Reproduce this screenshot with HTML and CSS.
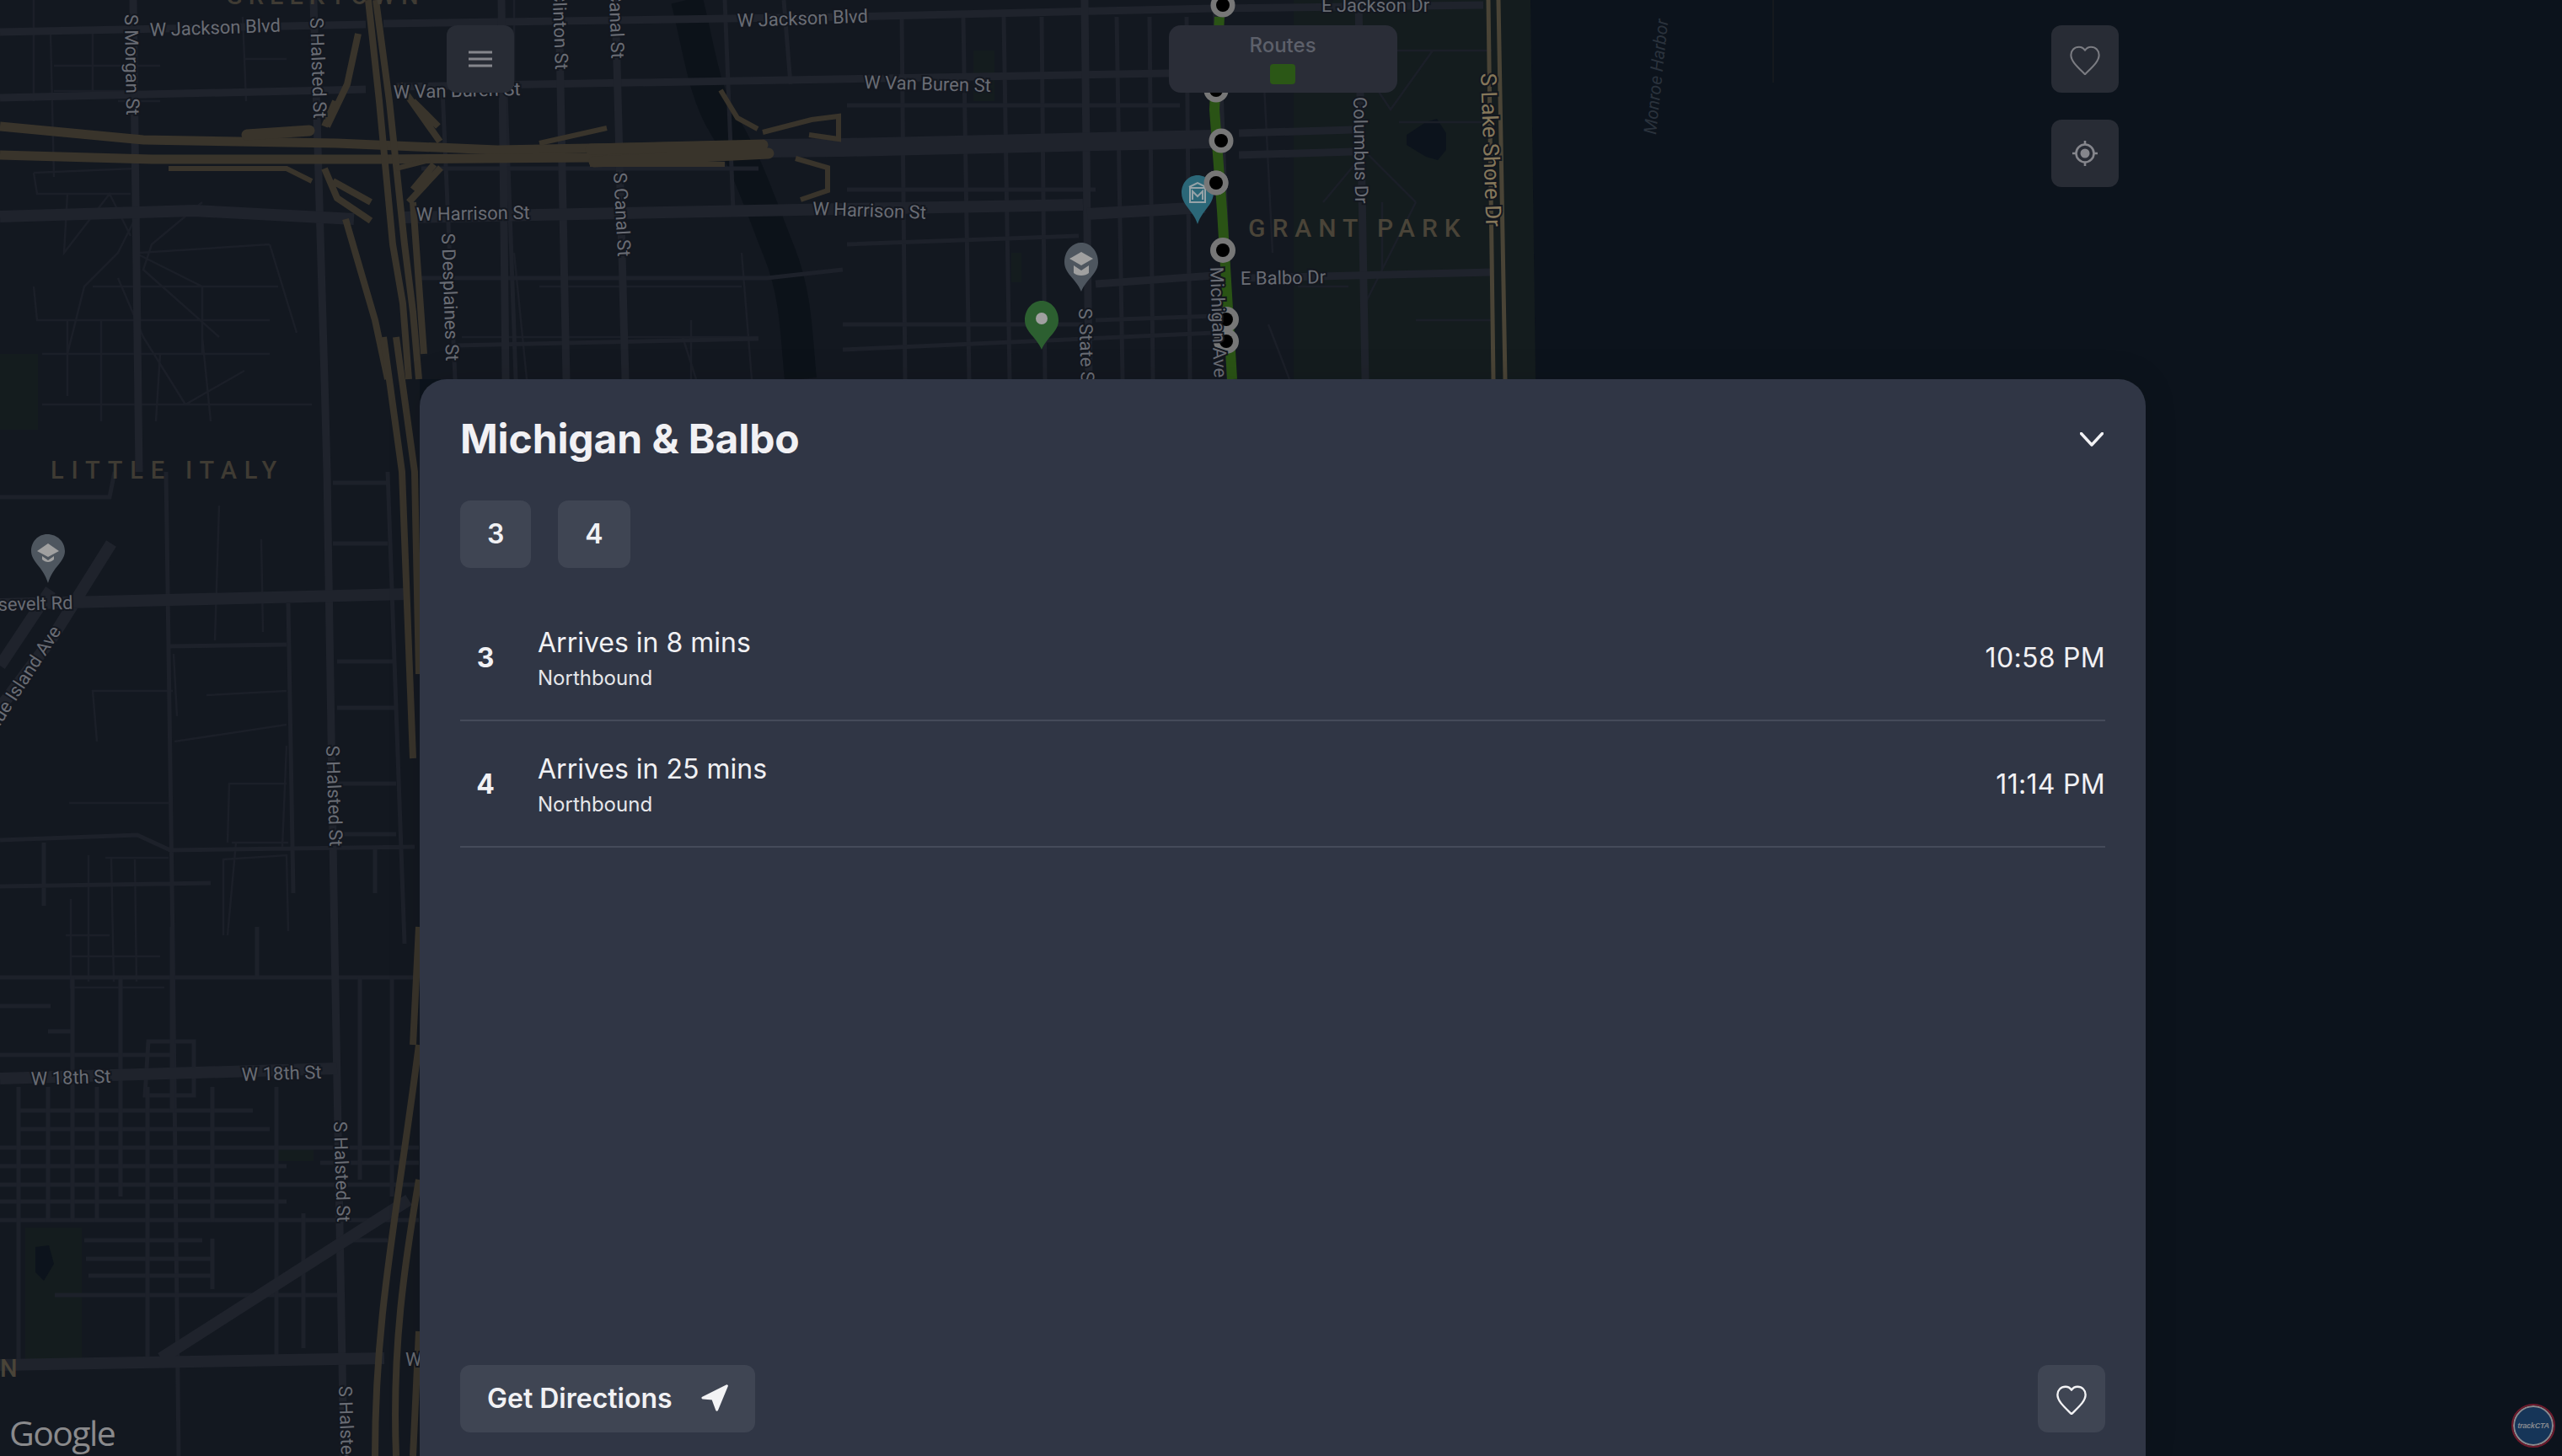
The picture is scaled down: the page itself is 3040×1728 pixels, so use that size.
FILE: index.html
```html
<!DOCTYPE html>
<html lang="en">
<head>
<meta charset="utf-8">
<title>Michigan &amp; Balbo</title>
<link rel="stylesheet" href="styles.css">
</head>
<body>
<div class="app">
  <svg class="map" viewBox="0 0 3040 1728" width="3040" height="1728" aria-label="Map">
    <rect class="land" width="3040" height="1728"/>
    <path class="lake" d="M1816 0H3040V1728H498V450H1822Z"/>
    <path class="park" d="M1535 0H1816L1822 450H1535Z"/>
    <path class="park" d="M30 1457H97V1615H30ZM0 420H45V510H0ZM1155 60H1180V120H1155ZM1200 300H1212V335H1200ZM328 1362H372V1378H328Z"/>
    <path class="river" d="M815 0C830 60 835 110 860 150S905 250 925 300 945 400 950 450"/>
    <path class="pond" d="M1692 145L1705 141 1716 158 1716 178 1706 190 1692 186 1669 172 1669 160Z"/>
    <path class="pond" d="M42 1480L58 1478 64 1500 52 1520 42 1510Z"/>

    <g class="thin">
      <path d="M40 0V120M60 40L64 210M110 40V110M288 20L292 120M64 78H190M64 108H150M190 120H140M290 70H340"/>
      <path d="M40 205L160 200M40 205L44 230H155M80 230L76 300 130 230 155 280M160 260L140 300 100 340 80 420M240 240L180 290 170 320 260 400M160 300L240 340 320 340M160 340H240V420H160ZM165 300L320 290M320 290L352 395M110 340H330M40 340L44 380H320M80 380V470M50 420H320M140 330L170 400 220 480 290 440M240 400L250 500M190 420L185 500M120 380V500M50 480H370"/>
      <path d="M640 340H880M610 300L625 450M880 300L892 450M548 400H900M810 400L826 450M610 0V100M820 380V450"/>
      <path d="M1535 60H1770M1590 40L1650 130 1700 60M1660 145H1760M1570 240L1620 180 1680 240M1640 240V320L1680 240M1620 360L1660 280M1680 380H1770M1540 340H1600M1500 100L1510 300M1505 385L1530 450"/>
      <path d="M205 820H110L115 880M207 880L340 860M270 1000L272 930H340M340 885L335 1005M275 1000H342M265 1110V1020L340 1015 342 1105M280 1000L270 1110M660 860L660 880M255 760L260 600M310 640L312 750M206 776L210 850M245 825L340 820"/>
      <path d="M82 953H200M125 1018H200M84 1067V1172H195M78 1110L130 1110M84 1135H190M105 1015L105 1165M132 1018L135 1165M160 1020L162 1165"/>
    </g>
    <g class="minor">
      <path d="M860 0L870 250M930 0L938 100M600 110L612 450M1070 20L1074 450M1143 20L1150 450M1191 20L1198 450M1236 20L1240 450M1325 20L1332 450M1364 20L1368 450M1408 20L1412 450M525 105L540 450"/>
      <path d="M500 200H900M500 330H910L1000 320M540 410L900 402M1005 125H1400M1005 225H1300M1005 290L1280 280M1170 385H1285M1300 380L1440 375M1000 385L1170 385"/>
      <path d="M1000 415L1440 395"/>
      <path d="M197 560L205 1120 212 1728M342 716L348 1060M0 997L163 991 202 1009 492 1005M200 767L340 765M0 1052L250 1048M460 560L480 1120M0 590H130L136 560M52 1000V1075M395 573H460M395 645H460M400 785H470M400 840H470M400 930H470M400 990H470M445 1005V1060M505 1005V1060"/>
      <path d="M0 1160H497M0 1194H60M88 1224H57M0 1252H205M176 1236H230V1300H172ZM20 1318H300M20 1340H320M0 1362H497M0 1384H340M0 1406H497M0 1426H340M0 1448H497M100 1472H240M102 1494H250M105 1514H250M65 1537H400M400 1472H460M380 1380H497"/>
      <path d="M22 1290V1620M57 1290V1450M86 1160V1450M115 1290V1450M143 1160V1420M175 1290V1620M204 1100V1320M252 1290V1450M252 1470V1530M328 1290V1610M360 1440V1600M427 1160V1400M465 1160V1420M305 1100V1160"/>
    </g>
    <g class="major">
      <path d="M0 38L434 29M455 28L1000 20 1440 10 1760 6"/>
      <path d="M0 116L434 106M470 103L1440 86"/>
      <path d="M158 0L165 560M372 0L385 450 388 560 397 1120 408 1728M595 0L600 450M663 0L672 450M730 0L742 450"/>
      <path d="M1287 0L1292 450M1612 0L1620 450M1443 0L1460 450"/>
      <path d="M1300 337L1440 327M1480 330L1770 323M1470 158L1605 154M1470 184L1605 180"/>
      <path class="wide" d="M0 257L230 250 420 260M480 258L1000 248 1285 243M1290 254L1430 246"/>
      <path class="wide" d="M0 717L482 705M0 1280L400 1268M0 1620L456 1612M485 1424L191 1612M132 645L60 760 0 840M60 700L0 790"/>
      <path class="broad" d="M905 176L1000 175 1440 165"/>
    </g>
    <g class="hwy">
      <path class="thick" d="M0 150L170 166 400 170 590 178 900 172"/>
      <path class="thick" d="M0 184L180 189 450 189 700 187 910 180"/>
      <path class="heavy" d="M293 160L367 155M701 177L905 172M705 192L912 182"/>
      <path d="M437 0L450 120 466 290 478 360 485 450M446 0L462 120 480 290 490 370 497 450"/>
      <path d="M425 40L412 100 388 150M398 120L385 150M385 200L400 235 440 262M410 260L445 380 460 450M395 215L440 240M474 100L522 168M490 120L520 150M523 199L485 240M515 195L490 225M490 240L503 420"/>
      <path class="ramp" d="M855 107L875 140 899 153M905 157L963 142 995 138 995 165 960 160M944 188L982 199 982 226 950 237M640 170L720 152M700 195L860 195M200 200L340 200 370 215M470 200L510 190"/>
      <path d="M455 400L477 560 490 900M470 400L492 560 497 800M497 1100L490 1240"/>
      <path d="M497 1240C470 1450 445 1560 445 1728M497 1400C480 1500 465 1600 470 1728M497 1580L490 1728"/>
      <path class="shore" d="M1766 0L1772 450M1778 0L1786 450"/>
    </g>
    <path class="route" d="M1447 20L1441 130 1450 250 1462 450"/>
    <g class="stops">
      <circle class="ring" cx="1451" cy="6" r="14.5"/><circle class="hole" cx="1451" cy="6" r="8"/>
      <circle class="ring" cx="1443" cy="107" r="14.5"/><circle class="hole" cx="1443" cy="107" r="8"/>
      <circle class="ring" cx="1449" cy="167" r="14.5"/><circle class="hole" cx="1449" cy="167" r="8"/>
      <circle class="ring" cx="1443" cy="217" r="14.5"/><circle class="hole" cx="1443" cy="217" r="8"/>
      <circle class="ring" cx="1451" cy="297" r="15"/><circle class="hole" cx="1451" cy="297" r="8"/>
      <circle class="ring" cx="1455" cy="379" r="15"/><circle class="hole" cx="1455" cy="379" r="8"/>
      <circle class="ring" cx="1455" cy="405" r="15"/><circle class="hole" cx="1455" cy="405" r="8"/>
    </g>
    <path class="pin-teal" d="M1421 208C1410 208 1402 217 1402 229 1402 243 1416 250 1421 266 1426 250 1440 243 1440 229 1440 217 1432 208 1421 208Z"/>
    <path class="glyph-stroke" d="M1411 222L1421 217 1431 222M1412 223H1430V240H1412ZM1415 237V227L1421 233 1427 227V237"/>
    <circle class="ring" cx="1443" cy="217" r="14.5"/><circle class="hole" cx="1443" cy="217" r="8"/>
    <path class="pin-grey" d="M1283 288C1272 288 1263 298 1263 311 1263 325 1277 331 1283 346 1289 331 1303 325 1303 311 1303 298 1294 288 1283 288Z"/>
    <path class="glyph-fill" d="M1283 299L1269 307 1283 315 1297 307ZM1274 315L1283 321 1292 315V324C1288 328 1278 328 1274 324Z"/>
    <path class="pin-green" d="M1236 357C1225 357 1216 367 1216 380 1216 394 1230 400 1236 415 1242 400 1256 394 1256 380 1256 367 1247 357 1236 357Z"/>
    <ellipse class="glyph-fill" cx="1236" cy="378" rx="7" ry="7"/>
    <path class="pin-grey" d="M56 634C45 634 37 643 37 654 37 667 51 672 57 692 63 672 77 667 77 654 77 643 68 634 56 634Z"/>
    <path class="glyph-fill" d="M57 645L44 654 57 661 70 654ZM50 660L57 665 64 660V664C60 668 54 668 50 664Z"/>

    <g class="lbl">
      <text x="178" y="43" transform="rotate(-2 178 43)">W Jackson Blvd</text>
      <text x="875" y="32" transform="rotate(-2 875 32)">W Jackson Blvd</text>
      <text x="467" y="117" transform="rotate(-1.5 467 117)">W Van Buren St</text>
      <text x="1025" y="105" transform="rotate(1.5 1025 105)">W Van Buren St</text>
      <text x="494" y="262" transform="rotate(-1 494 262)">W Harrison St</text>
      <text x="964" y="255" transform="rotate(2 964 255)">W Harrison St</text>
      <text x="1568" y="14">E Jackson Dr</text>
      <text x="1472" y="338" transform="rotate(-1 1472 338)">E Balbo Dr</text>
      <text transform="translate(148 17) rotate(89)">S Morgan St</text>
      <text transform="translate(368 21) rotate(88)">S Halsted St</text>
      <text transform="translate(655 -30) rotate(88)">S Clinton St</text>
      <text transform="translate(722 -30) rotate(88)">S Canal St</text>
      <text transform="translate(524 277) rotate(88)">S Desplaines St</text>
      <text transform="translate(728 205) rotate(87)">S Canal St</text>
      <text transform="translate(1606 115) rotate(89)">Columbus Dr</text>
      <text class="lbl-gold" transform="translate(1757 87) rotate(88)">S Lake Shore Dr</text>
      <text transform="translate(1280 366) rotate(88)">S State St</text>
      <text transform="translate(1436 317) rotate(88)">Michigan Ave</text>
      <text x="-41" y="725" transform="rotate(-1.5 0 725)">Roosevelt Rd</text>
      <text transform="translate(-8 874) rotate(-57)">Blue Island Ave</text>
      <text transform="translate(387 885) rotate(88)">S Halsted St</text>
      <text x="37" y="1288" transform="rotate(-2 37 1288)">W 18th St</text>
      <text x="287" y="1283" transform="rotate(-2 287 1283)">W 18th St</text>
      <text transform="translate(396 1331) rotate(88)">S Halsted St</text>
      <text transform="translate(402 1645) rotate(88)">S Halsted St</text>
      <text x="481" y="1621">W</text>
    </g>
    <g class="area">
      <text class="area-park" x="1481" y="281">GRANT PARK</text>
      <text class="area-hood" x="60" y="568">LITTLE ITALY</text>
      <text class="area-top" x="268" y="5">GREEKTOWN</text>
      <text class="area-n" x="0" y="1634">N</text>
    </g>
    <text class="harbor" transform="translate(1965 160) rotate(-84)">Monroe Harbor</text>
    <path class="pier" d="M2104 0V98"/>
    <text class="google" x="11" y="1716">Google</text>
  </svg>

  <div class="controls">
    <button class="icon-btn" type="button" aria-label="Menu">
      <svg class="ico-menu" viewBox="0 0 28 20" width="28" height="20"><path d="M0 2H28M0 10H28M0 18H28"/></svg>
    </button>
    <div class="routes">
      <span class="routes-title">Routes</span>
      <span class="routes-swatch"></span>
    </div>
    <div class="stack">
      <button class="icon-btn" type="button" aria-label="Favourites">
        <svg class="ico-heart dim" viewBox="0 0 24 24" width="38" height="38"><path d="M16.5 3C14.5 3 13 4 12 5.5 11 4 9.5 3 7.5 3 4 3 1.5 5.7 1.5 9 1.5 14 7 18.5 12 23.5 17 18.5 22.5 14 22.5 9 22.5 5.7 20 3 16.5 3Z"/></svg>
      </button>
      <button class="icon-btn" type="button" aria-label="Locate me">
        <svg class="ico-locate" viewBox="0 0 30 30" width="30" height="30"><circle class="ring-line" cx="15" cy="15" r="10.5"/><circle class="dot" cx="15" cy="15" r="5.5"/><path class="ring-line" d="M15 0V4M15 26V30M0 15H4M26 15H30"/></svg>
      </button>
    </div>
  </div>

  <section class="panel">
    <header class="panel-head">
      <h1 class="panel-title">Michigan &amp; Balbo</h1>
      <svg class="ico-chevron" viewBox="0 0 28 17" width="28" height="17"><path d="M1.5 1.5L14 15 26.5 1.5"/></svg>
    </header>
    <div class="pills">
      <span class="pill">3</span>
      <span class="pill">4</span>
    </div>
    <ul class="arrivals">
      <li class="arrival">
        <span class="arrival-num">3</span>
        <div class="arrival-text">
          <span class="arrival-eta">Arrives in 8 mins</span>
          <span class="arrival-dir">Northbound</span>
        </div>
        <span class="arrival-time">10:58 PM</span>
      </li>
      <li class="arrival">
        <span class="arrival-num">4</span>
        <div class="arrival-text">
          <span class="arrival-eta">Arrives in 25 mins</span>
          <span class="arrival-dir">Northbound</span>
        </div>
        <span class="arrival-time">11:14 PM</span>
      </li>
    </ul>
    <footer class="panel-foot">
      <button class="directions" type="button">
        <span>Get Directions</span>
        <svg class="ico-nav" viewBox="0 0 33 32" width="33" height="32"><path d="M31 1.5L2 16 14 17 19 30.5Z"/></svg>
      </button>
      <button class="fav" type="button" aria-label="Save stop">
        <svg class="ico-heart" viewBox="0 0 24 24" width="38" height="38"><path d="M16.5 3C14.5 3 13 4 12 5.5 11 4 9.5 3 7.5 3 4 3 1.5 5.7 1.5 9 1.5 14 7 18.5 12 23.5 17 18.5 22.5 14 22.5 9 22.5 5.7 20 3 16.5 3Z"/></svg>
      </button>
    </footer>
  </section>

  <div class="badge"><span>trackCTA</span></div>
</div>
</body>
</html>
```

FILE: styles.css
```css
* { box-sizing: border-box; }
html, body { margin: 0; padding: 0; background: #0c141d; }
body { font-family: Inter, "Liberation Sans", sans-serif; color: #f1f1f4; }

.app { position: relative; width: 3040px; height: 1728px; overflow: hidden; }

/* Map canvas */
.map { position: absolute; inset: 0; display: block; }
.land { fill: #131820; }
.lake { fill: #0c131c; }
.park { fill: #141c1e; }
.pond { fill: #0c131c; }
.river { fill: none; stroke: #0c1219; stroke-width: 38; }
.thin path, .minor path, .major path, .hwy path, .route, .pier { fill: none; }
.thin path { stroke: #1b1f28; stroke-width: 2.5; }
.minor path { stroke: #1d212a; stroke-width: 5; }
.major path { stroke: #1f232c; stroke-width: 9; }
.major .wide { stroke-width: 14; }
.major .broad { stroke-width: 22; }
.hwy path { stroke: #39342b; stroke-width: 8; }
.hwy .thick { stroke-width: 11; }
.hwy .heavy { stroke-width: 13; stroke-linecap: round; }
.hwy .ramp { stroke-width: 6; }
.hwy .shore { stroke: #4a4436; stroke-width: 5; }
.route { stroke: #2a5315; stroke-width: 12; }
.ring { fill: #777; }
.hole { fill: #000; }
.pin-teal { fill: #2b6778; }
.pin-grey { fill: #4e565f; }
.pin-green { fill: #2c5f30; }
.glyph-fill { fill: #a0a0a0; }
.glyph-stroke { fill: none; stroke: #96a3a8; stroke-width: 2; }
.pier { stroke: #15191e; stroke-width: 2; }

.lbl text {
  font-family: Roboto, "Liberation Sans", sans-serif;
  font-size: 22px;
  fill: #696c74;
  stroke: #13171f;
  stroke-width: 4px;
  paint-order: stroke;
}
.lbl .lbl-gold { fill: #85775a; font-size: 26px; }
.area text { font-family: Roboto, "Liberation Sans", sans-serif; font-weight: 500; paint-order: stroke; }
.area-park { font-size: 30px; letter-spacing: 8px; fill: #4a4438; }
.area-hood { font-size: 29px; letter-spacing: 8.8px; fill: #3f3b33; }
.area-top { font-size: 29px; letter-spacing: 7px; fill: #3f3b33; }
.area-n { font-size: 29px; fill: #4a4438; }
.harbor { font-family: Roboto, "Liberation Sans", sans-serif; font-style: italic; font-size: 21px; fill: #2a323c; }
.google { font-family: "Open Sans", Roboto, sans-serif; font-size: 41px; font-weight: 500; fill: #8a8a8c; letter-spacing: -1.6px; }

/* Floating controls */
.controls {
  position: absolute;
  top: 30px;
  left: 530px;
  width: 1984px;
  display: flex;
  justify-content: space-between;
  align-items: flex-start;
}
.stack { display: flex; flex-direction: column; gap: 32px; }
.icon-btn {
  width: 80px;
  height: 80px;
  padding: 0;
  border: 0;
  border-radius: 12px;
  background: #282c35;
  display: flex;
  align-items: center;
  justify-content: center;
}
.ico-menu path { fill: none; stroke: #85868c; stroke-width: 3; }
.ico-heart path { fill: none; stroke: #f3f3f5; stroke-width: 1.5; stroke-linejoin: round; }
.ico-heart.dim path { stroke: #7b7c82; stroke-width: 1.3; }
.ring-line { fill: none; stroke: #85868c; stroke-width: 2.6; }
.dot { fill: #85868c; }

.routes {
  width: 271px;
  height: 80px;
  border-radius: 14px;
  background: #2a2d37;
  display: flex;
  flex-direction: column;
  align-items: center;
  padding-top: 8px;
  gap: 6px;
}
.routes-title { font-size: 24px; line-height: 32px; font-weight: 500; color: #5d606a; }
.routes-swatch { width: 30px; height: 24px; border-radius: 4px; background: #2b5716; }

/* Bottom sheet */
.panel {
  position: absolute;
  left: 498px;
  top: 450px;
  bottom: 0;
  width: 2048px;
  padding: 0 48px 28px;
  display: flex;
  flex-direction: column;
  border-radius: 32px 32px 0 0;
  background: #303645;
  box-shadow: 0 0 40px rgba(0, 0, 0, .12);
}
.panel-head {
  display: flex;
  align-items: center;
  justify-content: space-between;
  padding-top: 47px;
  padding-bottom: 49px;
}
.panel-title { margin: 0; font-size: 48px; line-height: 48px; font-weight: 700; letter-spacing: -.1px; color: #f1f1f4; }
.ico-chevron { margin-right: 2px; }
.ico-chevron path { fill: none; stroke: #f3f3f5; stroke-width: 3.4; stroke-linecap: round; stroke-linejoin: round; }

.pills { display: flex; gap: 32px; }
.pill {
  height: 80px;
  padding: 0 32px 2px;
  border-radius: 12px;
  background: #3f4553;
  display: flex;
  align-items: center;
  justify-content: center;
  font-size: 32px;
  font-weight: 600;
}

.arrivals { list-style: none; margin: 32px 0 0; padding: 0; }
.arrival {
  height: 150px;
  display: flex;
  align-items: center;
  border-bottom: 2px solid #454b5a;
}
.arrival-num { width: 60px; text-align: center; font-size: 32px; font-weight: 700; }
.arrival-text { margin-left: 32px; padding-top: 4px; display: flex; flex-direction: column; gap: 6px; }
.arrival-eta { font-size: 32px; line-height: 40px; }
.arrival-dir { font-size: 24px; line-height: 32px; color: #e6e7ea; }
.arrival-time { margin-left: auto; font-size: 32px; letter-spacing: .3px; }

.panel-foot { margin-top: auto; display: flex; justify-content: space-between; align-items: center; }
.directions, .fav {
  height: 80px;
  border: 0;
  border-radius: 12px;
  background: #3f4553;
  color: #f1f1f4;
  font: inherit;
  display: flex;
  align-items: center;
  justify-content: center;
}
.directions { width: 350px; padding: 0 32px 2px; gap: 34px; font-size: 32px; font-weight: 600; justify-content: flex-start; white-space: nowrap; }
.fav { width: 80px; padding: 0; }
.ico-nav path { fill: #f3f3f5; stroke: #f3f3f5; stroke-width: 3; stroke-linejoin: round; }

.badge {
  position: absolute;
  right: 10px;
  bottom: 12px;
  width: 48px;
  height: 48px;
  border-radius: 50%;
  background: #163558;
  border: 2px solid #8a8a8e;
  outline: 2px solid #6e1a2c;
  display: flex;
  align-items: center;
  justify-content: center;
}
.badge span { font-size: 9px; font-weight: 700; font-style: italic; color: #85888f; font-family: "Liberation Sans", sans-serif; letter-spacing: -.2px; }
```
